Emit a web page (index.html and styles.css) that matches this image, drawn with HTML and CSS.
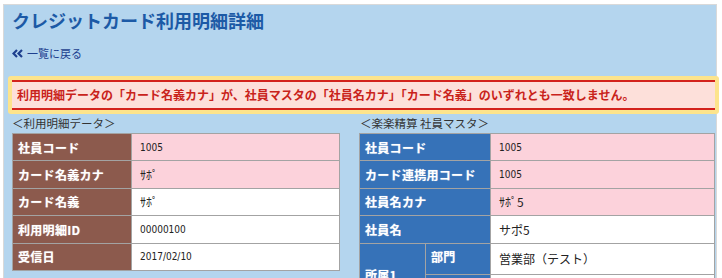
FILE: index.html
```html
<!DOCTYPE html>
<html lang="ja">
<head>
  <meta charset="UTF-8" />
  <title>クレジットカード利用明細詳細</title>
  <link rel="stylesheet" href="styles.css">
</head>
<body>
  <div class="page">
    <h1>クレジットカード利用明細詳細</h1>
    <a class="back" href="#">
      <svg class="arrow" width="11" height="9" viewBox="0 0 11 9"><path d="M5 1 L1.5 4.5 L5 8 M10 1 L6.5 4.5 L10 8" fill="none" stroke="#1d3f8e" stroke-width="2.2"/></svg>一覧に戻る
    </a>

    <div class="notice">
      <p>利用明細データの「カード名義カナ」が、社員マスタの「社員名カナ」「カード名義」のいずれとも一致しません。</p>
    </div>

    <div class="compare">
      <div class="side side-left">
        <div class="caption">＜利用明細データ＞</div>
        <table class="detail brown">
          <colgroup><col class="c-head"><col></colgroup>
          <tr class="ng"><th>社員コード</th><td>1005</td></tr>
          <tr class="ng"><th>カード名義カナ</th><td class="kana">ｻﾎﾟ</td></tr>
          <tr><th>カード名義</th><td class="kana">ｻﾎﾟ</td></tr>
          <tr><th>利用明細ID</th><td>00000100</td></tr>
          <tr><th>受信日</th><td>2017/02/10</td></tr>
        </table>
      </div>
      <div class="side side-right">
        <div class="caption">＜楽楽精算 社員マスタ＞</div>
        <table class="detail blue">
          <colgroup><col class="c-group"><col class="c-sub"><col></colgroup>
          <tr class="ng"><th colspan="2">社員コード</th><td>1005</td></tr>
          <tr class="ng"><th colspan="2">カード連携用コード</th><td>1005</td></tr>
          <tr class="ng"><th colspan="2">社員名カナ</th><td class="kana">ｻﾎﾟ5</td></tr>
          <tr><th colspan="2">社員名</th><td class="wide">サポ5</td></tr>
          <tr><th class="group" rowspan="2">所属1</th><th class="sub">部門</th><td class="wide">営業部（テスト）</td></tr>
          <tr><th class="sub"></th><td class="wide"></td></tr>
        </table>
      </div>
    </div>
  </div>
</body>
</html>
```

FILE: styles.css
```css
body {
  margin: 0;
  background: #fff;
  font-family: "Noto Sans CJK JP", "Noto Sans", sans-serif;
  color: #333;
}
.page {
  margin: 4px 5px 0 3px;
  border: 1px solid #d9d9d9;
  border-bottom: none;
  background: #b4d5ee;
  height: 300px;
}
h1 {
  margin: 0;
  padding: 4px 0 0 8px;
  font-size: 18px;
  line-height: 22px;
  color: #1c5aa6;
}
.back {
  display: flex;
  align-items: center;
  margin: 15px 0 0 8px;
  font-size: 11px;
  line-height: 14px;
  color: #1d3f8e;
  text-decoration: none;
}
.back .arrow {
  margin-right: 4px;
}
.notice {
  margin: 16px -3px 0 4px;
  padding: 4px;
  background: #fde48c;
  border-radius: 3px;
}
.notice p {
  margin: 0;
  background: #fde0da;
  border-top: 2px solid #d3231c;
  border-bottom: 2px solid #d3231c;
  padding: 0 0 0 5px;
  height: 26px;
  line-height: 26px;
  font-size: 12px;
  font-weight: bold;
  color: #c9231b;
  white-space: nowrap;
}
.compare {
  display: flex;
  gap: 19px;
  padding: 2px 1px 0 8px;
}
.side-left {
  width: 328px;
}
.side-right {
  flex: 1;
}
.caption {
  font-size: 11.5px;
  line-height: 14px;
  height: 17px;
  color: #333;
}
.side-right .caption {
  margin-left: 1px;
}
.detail {
  width: 100%;
  table-layout: fixed;
  border-collapse: collapse;
  background: #fff;
}
.c-head {
  width: 119px;
}
.c-group {
  width: 66px;
}
.c-sub {
  width: 65px;
}
.detail th,
.detail td {
  border: 1px solid #a3a3a3;
  height: 26.4px;
  padding: 0 0 0 5px;
  text-align: left;
  font-size: 12px;
  white-space: nowrap;
}
.detail th {
  color: #fff;
  font-weight: bold;
  text-shadow: 0 0 1px rgba(255, 255, 255, 0.6);
  letter-spacing: 0.3px;
}
.brown th {
  background: #8c5a4d;
}
.blue th {
  background: #3672b8;
}
.blue th.group {
  vertical-align: middle;
}
.blue th.sub {
  vertical-align: top;
  padding-top: 4px;
}
.detail td {
  font-family: "DejaVu Sans Condensed", "Noto Sans CJK JP", sans-serif;
  font-size: 10px;
  color: #222;
  padding-left: 8px;
}
.detail td.kana {
  font-family: "Noto Sans CJK JP", sans-serif;
  font-size: 12px;
}
.detail td.wide {
  font-family: "Noto Sans CJK JP", sans-serif;
  font-size: 12px;
}
.ng td {
  background: #fcd2db;
}
```
